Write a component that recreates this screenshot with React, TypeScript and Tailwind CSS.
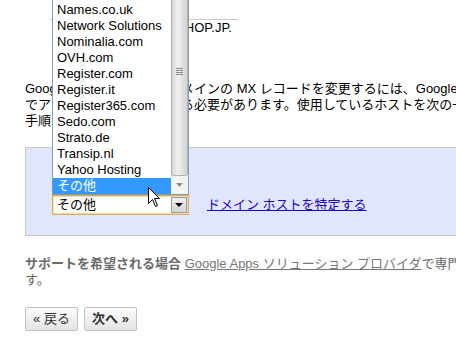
import React from 'react';

const hosts = [
  'Melbourne IT',
  'Names.co.uk',
  'Network Solutions',
  'Nominalia.com',
  'OVH.com',
  'Register.com',
  'Register.it',
  'Register365.com',
  'Sedo.com',
  'Strato.de',
  'Transip.nl',
  'Yahoo Hosting',
  'その他',
];

const SelectedHost = 'その他';

// 開いている状態のドロップダウン一覧
const HostList: React.FC = () => (
  <div className="absolute left-[52px] top-[-15px] w-[137px] h-[210px] flex border border-[#7f9db9] bg-white">
    <ul className="flex-1 flex flex-col">
      {hosts.map((h) => (
        <li
          key={h}
          className={
            h === SelectedHost
              ? 'h-[16px] pl-[4px] bg-[#3399ff] text-white whitespace-nowrap'
              : 'h-[16px] pl-[4px] whitespace-nowrap'
          }
        >
          {h}
        </li>
      ))}
    </ul>
    <div className="w-[17px] flex flex-col bg-[#f6f6f6]">
      <div className="flex-1 flex items-center justify-center pb-[19px] rounded-[2px] border border-[#b4b4b4] bg-[linear-gradient(to_right,#d6d6d6,#f1f1f1_40%,#d2d2d2)]">
        <div className="flex flex-col gap-[1px]">
          <div className="w-[7px] h-px bg-[#8a8a8a]" />
          <div className="w-[7px] h-px bg-[#8a8a8a]" />
          <div className="w-[7px] h-px bg-[#8a8a8a]" />
          <div className="w-[7px] h-px bg-[#8a8a8a]" />
        </div>
      </div>
      <div className="h-[18px] flex items-center justify-center bg-[#f3f3f3]">
        <svg width="7" height="4" viewBox="0 0 7 4">
          <path d="M0 0h7L3.5 4z" fill="#8c8c8c" />
        </svg>
      </div>
    </div>
  </div>
);

const Cursor: React.FC = () => (
  <svg className="absolute left-[148px] top-[187px]" width="13" height="21" viewBox="0 0 13 21">
    <path
      d="M0.5 0.5 L0.5 16.5 L4.5 12.5 L7.5 19.5 L9.5 18.5 L6.5 11.5 L11.5 11.5 Z"
      fill="#fff"
      stroke="#000"
      strokeWidth="1"
      strokeLinejoin="miter"
    />
  </svg>
);

export default function App() {
  return (
    <div className="relative w-[456px] h-[344px] overflow-hidden bg-white text-black text-[13px] leading-[16px] font-['Liberation_Sans','Noto_Sans_CJK_JP',sans-serif]">
      <div className="w-[700px]">
        {/* ドメイン名 */}
        <div className="mt-[19px] ml-[50px] w-[188px] border-t border-[#c8c8c8]">
          <div className="pr-[6px] text-right whitespace-nowrap">EXAMPLESHOP.JP.</div>
        </div>

        <p className="mt-[45px] ml-[25px] whitespace-nowrap">
          Google Apps で使用するドメインの MX レコードを変更するには、Google のメール サーバー
          <br />
          でアカウント設定を変更する必要があります。使用しているホストを次の一覧から選択し、
          <br />
          手順に従ってください。
        </p>

        <div className="mt-[18px] ml-[25px] w-[650px] border border-[#c9c9c9] bg-[#e1e7fb] pl-[26px] pt-[47px] pb-[20px]">
          <div className="flex items-center">
            <div className="w-[137px] h-[20px] flex items-center border border-[#d9ad5c] bg-white shadow-[inset_0_0_0_1px_#f5dca6]">
              <span className="pl-[4px]">{SelectedHost}</span>
              <div className="ml-auto mr-[1px] w-[16px] h-[16px] flex items-center justify-center border border-[#9c9c9c] bg-[linear-gradient(to_bottom,#f0f0f0,#d4d4d4)]">
                <svg width="8" height="4" viewBox="0 0 8 4">
                  <path d="M0 0h8L4 4z" fill="#000" />
                </svg>
              </div>
            </div>
            <a href="#" className="ml-[18px] text-[#2200cc] underline whitespace-nowrap">
              ドメイン ホストを特定する
            </a>
          </div>
        </div>

        <p className="mt-[20px] ml-[25px] whitespace-nowrap text-[#666]">
          <strong className="font-bold text-[#6a6a6a]">サポートを希望される場合</strong>{' '}
          <a href="#" className="underline text-[#777]">
            Google Apps ソリューション プロバイダ
          </a>
          で専門のサポートを受けることができま
          <br />
          す。
        </p>

        <div className="mt-[19px] ml-[25px] flex gap-[6px]">
          <button className="w-[53px] h-[24px] rounded-[2px] border border-[#c2c2c2] bg-[linear-gradient(to_bottom,#fbfbfb,#e4e4e4)] text-[#333]">
            « 戻る
          </button>
          <button className="w-[53px] h-[24px] rounded-[2px] border border-[#c2c2c2] bg-[linear-gradient(to_bottom,#fbfbfb,#e4e4e4)] font-bold text-[#333]">
            次へ »
          </button>
        </div>
      </div>

      <HostList />
      <Cursor />
    </div>
  );
}
